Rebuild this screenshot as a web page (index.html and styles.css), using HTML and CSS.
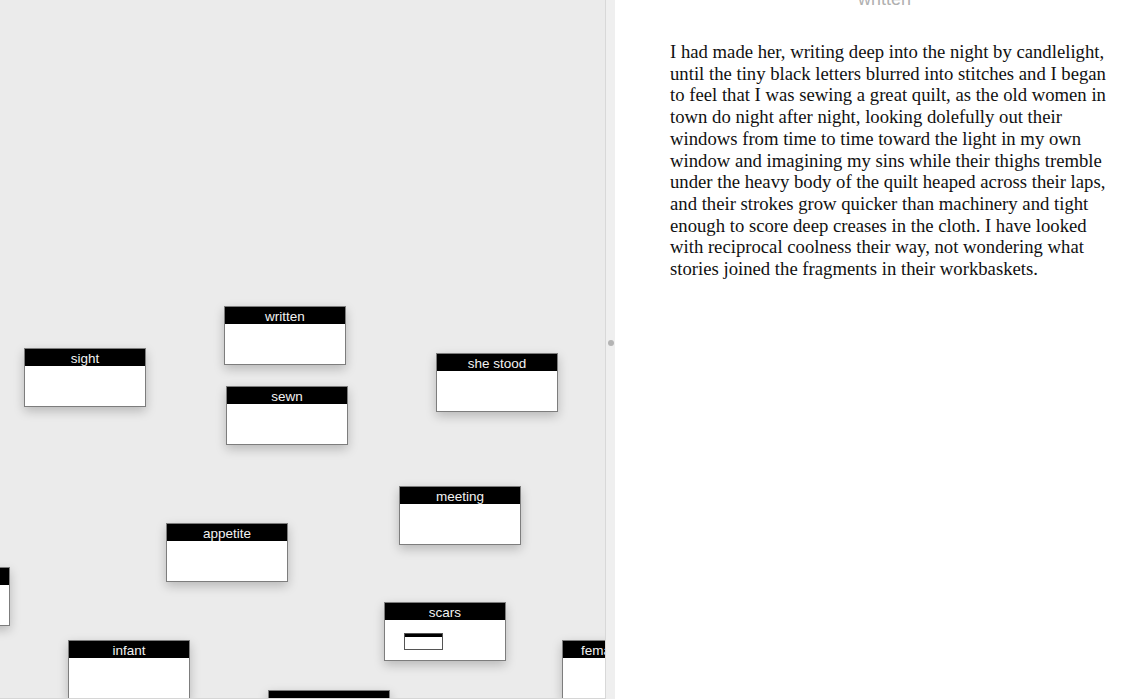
FILE: index.html
```html
<!DOCTYPE html>
<html>
<head>
<meta charset="utf-8">
<link rel="stylesheet" href="styles.css">
</head>
<body>
<div class="app">
  <div class="canvas">
    <div class="card" style="left:224px;top:306px"><div class="card-title">written</div><div class="card-body"></div></div>
    <div class="card" style="left:24px;top:348px"><div class="card-title">sight</div><div class="card-body"></div></div>
    <div class="card" style="left:226px;top:386px"><div class="card-title">sewn</div><div class="card-body"></div></div>
    <div class="card" style="left:436px;top:353px"><div class="card-title">she stood</div><div class="card-body"></div></div>
    <div class="card" style="left:399px;top:486px"><div class="card-title">meeting</div><div class="card-body"></div></div>
    <div class="card" style="left:166px;top:523px"><div class="card-title">appetite</div><div class="card-body"></div></div>
    <div class="card" style="left:-112px;top:567px"><div class="card-title"></div><div class="card-body"></div></div>
    <div class="card" style="left:384px;top:602px"><div class="card-title">scars</div><div class="card-body"><div class="mini"><div class="mini-title"></div></div></div></div>
    <div class="card" style="left:68px;top:640px"><div class="card-title">infant</div><div class="card-body"></div></div>
    <div class="card card-edge" style="left:562px;top:640px"><div class="card-title">female</div><div class="card-body"></div></div>
    <div class="card" style="left:268px;top:690px"><div class="card-title">grave</div><div class="card-body"></div></div>
  </div>
  <div class="divider"><span class="handle"></span></div>
  <div class="reader">
    <div class="reader-title">written</div>
    <p class="passage">I had made her, writing deep into the night by candlelight, until the tiny black letters blurred into stitches and I began to feel that I was sewing a great quilt, as the old women in town do night after night, looking dolefully out their windows from time to time toward the light in my own window and imagining my sins while their thighs tremble under the heavy body of the quilt heaped across their laps, and their strokes grow quicker than machinery and tight enough to score deep creases in the cloth. I have looked with reciprocal coolness their way, not wondering what stories joined the fragments in their workbaskets.</p>
  </div>
</div>
</body>
</html>
```
FILE: styles.css
```css
html, body {
  margin: 0;
  padding: 0;
  width: 1140px;
  height: 699px;
  overflow: hidden;
  background: #ffffff;
}

.app {
  display: flex;
  width: 1140px;
  height: 699px;
}

.canvas {
  position: relative;
  width: 605px;
  height: 699px;
  flex: none;
  background: #ebebeb;
  overflow: hidden;
  border-bottom: 1px solid #d6d6d6;
  box-sizing: border-box;
}

.card {
  position: absolute;
  width: 122px;
  height: 59px;
  box-sizing: border-box;
  border: 1px solid #7d7d7d;
  background: #ffffff;
  box-shadow: 0 4px 10px rgba(0, 0, 0, 0.22);
  display: flex;
  flex-direction: column;
}

.card-title {
  height: 17px;
  flex: none;
  background: #000000;
  color: #f2f2f2;
  font-family: "Liberation Sans", Arial, sans-serif;
  font-size: 13.5px;
  line-height: 19px;
  text-align: center;
  white-space: nowrap;
  overflow: hidden;
}

.card-edge .card-title {
  text-align: left;
  padding-left: 18px;
}

.card-body {
  flex: 1;
  background: #ffffff;
  position: relative;
}

.mini {
  position: absolute;
  left: 19px;
  top: 13px;
  width: 39px;
  height: 17px;
  box-sizing: border-box;
  border: 1px solid #555555;
  background: #ffffff;
}

.mini-title {
  height: 3px;
  background: #000000;
}

.divider {
  width: 10px;
  flex: none;
  background: #efefef;
  border-left: 1px solid #d8d8d8;
  box-sizing: border-box;
  display: flex;
  align-items: center;
  justify-content: center;
}

.handle {
  width: 6px;
  height: 6px;
  border-radius: 50%;
  background: #b4b4b4;
  margin-top: -13px;
  margin-left: 1px;
}

.reader {
  flex: 1;
  position: relative;
  padding: 0 0 0 55px;
}

.reader-title {
  position: absolute;
  left: 0;
  right: 0;
  top: -11px;
  text-align: center;
  padding-left: 14px;
  font-family: "Liberation Sans", Arial, sans-serif;
  font-size: 18px;
  color: #b0b0b0;
}

.passage {
  margin: 0;
  padding-top: 41px;
  width: 442px;
  font-family: "Liberation Serif", "Times New Roman", serif;
  font-size: 18.7px;
  line-height: 21.7px;
  color: #111111;
}
```
